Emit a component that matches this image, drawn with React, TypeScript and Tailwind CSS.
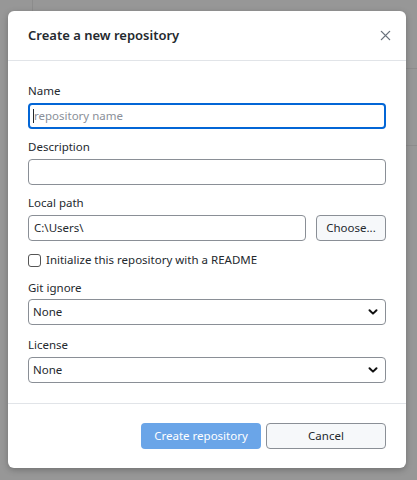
import React from "react";

const font = { fontFamily: '"Noto Sans", "Open Sans", sans-serif' };

function Chevron() {
  return (
    <svg width="10" height="10" viewBox="0 0 10 10" className="absolute right-[7px] top-1/2 -translate-y-1/2 pointer-events-none">
      <path d="M1.5 3.2 L5 6.6 L8.5 3.2" fill="none" stroke="#111" strokeWidth="2" strokeLinecap="round" strokeLinejoin="round" />
    </svg>
  );
}

function Select() {
  return (
    <div className="relative h-[26px] w-full rounded-[4px] border border-[#8a8f96] bg-white flex items-center pl-[4px] text-[#24292e]">
      None
      <Chevron />
    </div>
  );
}

export default function App() {
  return (
    <div className="relative w-[417px] h-[480px] bg-[#979797] overflow-hidden" style={font}>
      {/* app chrome peeking behind the overlay */}
      <div className="absolute left-[32px] top-0 h-[12px] w-px bg-[#8c8c8c]" />
      <div className="absolute right-0 top-[68px] h-px w-[12px] bg-[#8c8c8c]" />
      <div className="absolute right-0 top-[145px] h-px w-[12px] bg-[#8c8c8c]" />

      <div className="absolute left-[8px] top-[11px] w-[398px] h-[457px] bg-white rounded-[6px] shadow-[0_2px_6px_rgba(0,0,0,0.25)] flex flex-col">
        <div className="h-[50px] shrink-0 flex items-center justify-between pl-[20px] pr-[15px] border-b border-[#e1e4e8]">
          <h1 className="text-[13px] font-semibold text-[#24292e]">Create a new repository</h1>
          <svg width="11" height="11" viewBox="0 0 12 12">
            <path d="M1.5 1.5 L10.5 10.5 M10.5 1.5 L1.5 10.5" stroke="#6a737d" strokeWidth="1.5" strokeLinecap="round" />
          </svg>
        </div>

        <div className="flex flex-col px-[20px] pt-[22px] pb-[20px] border-b border-[#e1e4e8] text-[11.5px] text-[#24292e]">
          <label className="leading-[16px] mb-[4px]">Name</label>
          <div className="h-[26px] rounded-[4px] border-2 border-[#0366d6] flex items-center pl-[3px]">
            <span className="w-px h-[14px] bg-[#24292e]" />
            <span className="text-[#8a9099]">repository name</span>
          </div>

          <label className="leading-[16px] mt-[10px] mb-[4px]">Description</label>
          <div className="h-[26px] rounded-[4px] border border-[#8a8f96]" />

          <label className="leading-[16px] mt-[10px] mb-[4px]">Local path</label>
          <div className="flex gap-[10px]">
            <div className="flex-1 h-[26px] rounded-[4px] border border-[#8a8f96] flex items-center pl-[5px]">C:\Users\</div>
            <div className="w-[70px] h-[26px] rounded-[4px] border border-[#8a8f96] bg-[#f6f8fa] flex items-center justify-center">Choose...</div>
          </div>

          <div className="flex items-center gap-[5px] mt-[11px] h-[16px]">
            <span className="w-[13px] h-[13px] rounded-[3px] border border-[#555] bg-white" />
            <span>Initialize this repository with a README</span>
          </div>

          <label className="leading-[16px] mt-[12px] mb-[3px]">Git ignore</label>
          <Select />

          <label className="leading-[16px] mt-[12px] mb-[4px]">License</label>
          <Select />
        </div>

        <div className="flex justify-end gap-[5px] px-[20px] pt-[19px] text-[11.5px]">
          <div className="w-[120px] h-[26px] rounded-[4px] bg-[#6aa5e8] text-white flex items-center justify-center">Create repository</div>
          <div className="w-[120px] h-[26px] rounded-[4px] border border-[#8a8f96] bg-[#f6f8fa] text-[#24292e] flex items-center justify-center">Cancel</div>
        </div>
      </div>
    </div>
  );
}
